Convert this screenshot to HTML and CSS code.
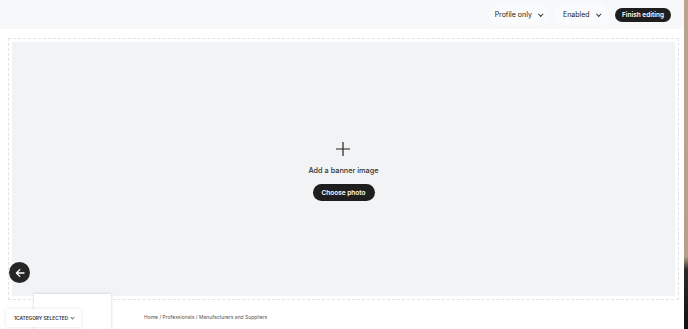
FILE: index.html
```html
<!DOCTYPE html>
<html lang="en">
<head>
  <meta charset="utf-8" />
  <title>Edit profile</title>
  <link rel="stylesheet" href="styles.css">
</head>
<body>
  <div class="page">
    <!-- Top edit bar -->
    <div class="topbar">
      <button type="button" class="select">Profile only <span class="chev"></span></button>
      <button type="button" class="select">Enabled <span class="chev"></span></button>
      <button type="button" class="finish">Finish editing</button>
    </div>

    <!-- Banner -->
    <div class="banner-frame">
      <div class="banner">
        <svg class="plus" width="16" height="16" viewBox="0 0 16 16">
          <path d="M8 1v14M1 8h14" stroke="#222" stroke-width="1.2" fill="none"/>
        </svg>
        <p class="banner-label">Add a banner image</p>
        <button type="button" class="choose">Choose photo</button>
      </div>
    </div>

    <div class="crumbs">Home / Professionals / Manufacturers and Suppliers</div>

    <button type="button" class="back">
      <svg width="10" height="10" viewBox="0 0 10 10">
        <path d="M9 5H1.5M4.8 1.6L1.4 5l3.4 3.4" stroke="#fff" stroke-width="1.3" fill="none" stroke-linecap="round" stroke-linejoin="round"/>
      </svg>
    </button>
    <div class="profile-card"></div>
    <div class="category">1CATEGORY SELECTED <span class="chev small"></span></div>
  </div>
  <div class="edge"></div>
</body>
</html>
```

FILE: styles.css
```css
html, body {
  margin: 0;
  height: 100%;
}
body {
  display: flex;
  font-family: Inter, 'Liberation Sans', sans-serif;
  color: #222;
  background-color: #fff;
  overflow: hidden;
}
.page {
  flex: 1;
  position: relative;
  display: flex;
  flex-direction: column;
}
.edge {
  width: 4px;
  background: linear-gradient(#b9a58d 0%, #b5a088 78%, #2a2a2a 82%, #111 100%);
}
.topbar {
  height: 29px;
  background-color: #f7f8fa;
  display: flex;
  align-items: center;
  justify-content: flex-end;
  padding-right: 13px;
  gap: 6px;
}
button {
  font-family: inherit;
  border: none;
  cursor: pointer;
}
.select {
  height: 22px;
  padding: 0;
  background-color: #fafbfc;
  border-radius: 11px;
  font-size: 7px;
  color: #222;
  white-space: nowrap;
  display: flex;
  align-items: center;
  justify-content: center;
  gap: 7px;
}
.select:first-child {
  width: 59px;
}
.select:nth-child(2) {
  width: 55px;
}
.chev {
  display: inline-block;
  width: 2.5px;
  height: 2.5px;
  border-right: 1px solid #333;
  border-bottom: 1px solid #333;
  transform: rotate(45deg);
  margin-top: -2px;
}
.chev.small {
  width: 2px;
  height: 2px;
  border-color: #777;
  margin-left: 3px;
}
.finish {
  width: 56px;
  height: 14px;
  padding: 0;
  background-color: #1e1e1e;
  color: #fff;
  font-size: 6.5px;
  font-weight: 600;
  border-radius: 7px;
  white-space: nowrap;
}
.banner-frame {
  margin: 9px 5px 0 8px;
  border: 1px dashed #e2e3e6;
  padding: 3px;
}
.banner {
  height: 254px;
  background-color: #f2f3f5;
  display: flex;
  flex-direction: column;
  align-items: center;
  justify-content: center;
}
.plus {
  margin-top: 4px;
  margin-right: 2px;
}
.banner-label {
  margin: 9px 0 9px;
  font-size: 7.3px;
  font-weight: 500;
  color: #333;
}
.choose {
  width: 62px;
  height: 17px;
  padding: 0;
  background-color: #1e1e1e;
  color: #fff;
  font-size: 6.5px;
  font-weight: 600;
  border-radius: 9px;
}
.crumbs {
  margin: 14px 0 0 144px;
  font-size: 5px;
  color: #555;
}
.back {
  position: absolute;
  left: 9px;
  top: 262px;
  width: 21px;
  height: 21px;
  border-radius: 50%;
  background-color: #262626;
  display: flex;
  align-items: center;
  justify-content: center;
  padding: 0;
}
.profile-card {
  position: absolute;
  left: 34px;
  top: 294px;
  width: 77px;
  height: 40px;
  background-color: #fff;
  box-shadow: 0 0 3px rgba(0, 0, 0, 0.18);
}
.category {
  position: absolute;
  left: 6px;
  top: 309px;
  width: 75px;
  height: 18px;
  box-sizing: border-box;
  padding-left: 8px;
  background-color: #fff;
  box-shadow: 0 0 3px rgba(0, 0, 0, 0.12);
  font-size: 4.8px;
  font-weight: 600;
  color: #333;
  display: flex;
  align-items: center;
}
```
